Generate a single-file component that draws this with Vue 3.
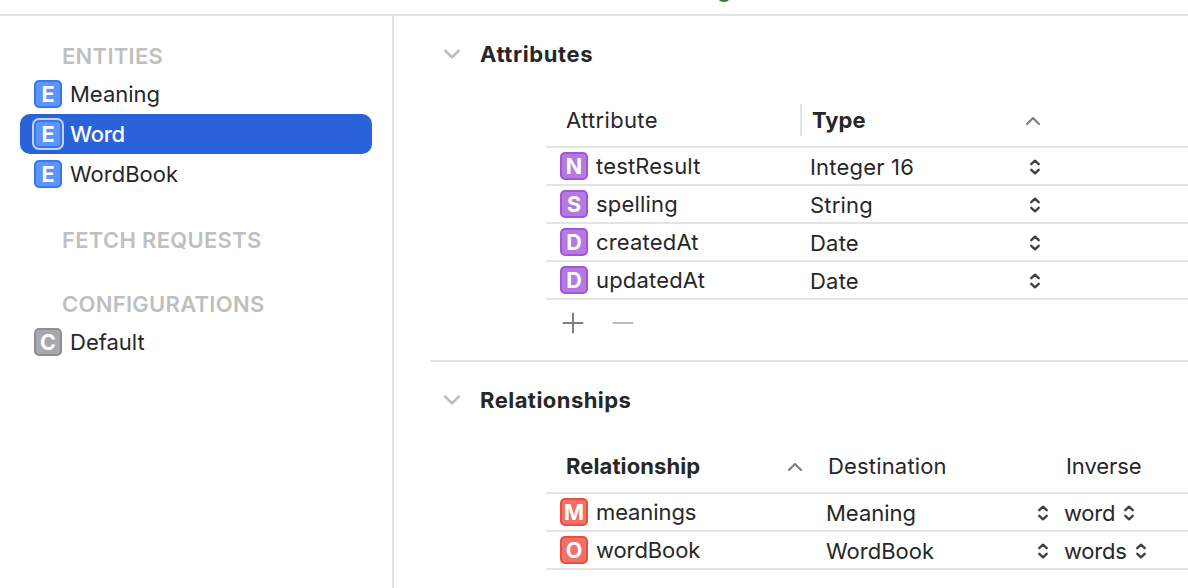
<script setup>
const entities = [
  { name: 'Meaning' },
  { name: 'Word', selected: true },
  { name: 'WordBook' },
]
const attributes = [
  { letter: 'N', name: 'testResult', type: 'Integer 16' },
  { letter: 'S', name: 'spelling', type: 'String' },
  { letter: 'D', name: 'createdAt', type: 'Date' },
  { letter: 'D', name: 'updatedAt', type: 'Date' },
]
const relationships = [
  { letter: 'M', name: 'meanings', destination: 'Meaning', inverse: 'word' },
  { letter: 'O', name: 'wordBook', destination: 'WordBook', inverse: 'words' },
]
const stepper = 'M1.3 5.2 L5 1.7 L8.7 5.2 M1.3 10.8 L5 14.3 L8.7 10.8'
</script>

<template>
  <div class="window">
    <header class="topbar">
      <svg class="top-mark" width="12" height="2" viewBox="0 0 12 2"><path d="M0.8 0 Q2.5 2 6 2 Q9.5 2 11.2 0Z" fill="#2b7a3b" /></svg>
    </header>
    <div class="body">
      <aside class="sidebar">
        <h3 class="group">ENTITIES</h3>
        <div v-for="e in entities" :key="e.name" class="item" :class="{ selected: e.selected }">
          <span class="badge blue">E</span><span>{{ e.name }}</span>
        </div>
        <h3 class="group fetch">FETCH REQUESTS</h3>
        <h3 class="group config">CONFIGURATIONS</h3>
        <div class="item">
          <span class="badge gray">C</span><span>Default</span>
        </div>
      </aside>
      <main class="detail">
        <section class="section">
          <h2 class="title">
            <svg width="18" height="12" viewBox="0 0 18 12"><path d="M2.2 2.6 L9 9.2 L15.8 2.6" fill="none" stroke="#bdbdbd" stroke-width="2.6" stroke-linecap="round" stroke-linejoin="round" /></svg>
            <span>Attributes</span>
          </h2>
          <div class="table attrs">
            <div class="row head">
              <span class="name">Attribute</span>
              <span class="divided"><b>Type</b></span>
              <svg class="sort" width="16" height="10" viewBox="0 0 16 10"><path d="M2 8 L8 2 L14 8" fill="none" stroke="#7c7c7c" stroke-width="2.1" stroke-linecap="round" stroke-linejoin="round" /></svg>
            </div>
            <div v-for="a in attributes" :key="a.name" class="row">
              <span class="name"><span class="badge purple">{{ a.letter }}</span>{{ a.name }}</span>
              <span class="value">{{ a.type }}</span>
              <svg class="step" width="10" height="16" viewBox="0 0 10 16"><path :d="stepper" /></svg>
            </div>
          </div>
          <div class="actions">
            <svg width="22" height="22" viewBox="0 0 22 22"><path d="M1.5 11 H20.5 M11 1.5 V20.5" stroke="#7f7f7f" stroke-width="2" stroke-linecap="round" /></svg>
            <svg width="22" height="22" viewBox="0 0 22 22"><path d="M1.5 11 H20.5" stroke="#bababa" stroke-width="2" stroke-linecap="round" /></svg>
          </div>
        </section>
        <section class="section second">
          <h2 class="title">
            <svg width="18" height="12" viewBox="0 0 18 12"><path d="M2.2 2.6 L9 9.2 L15.8 2.6" fill="none" stroke="#bdbdbd" stroke-width="2.6" stroke-linecap="round" stroke-linejoin="round" /></svg>
            <span>Relationships</span>
          </h2>
          <div class="table rels">
            <div class="row head">
              <span class="name"><b>Relationship</b></span>
              <svg class="sort" width="16" height="10" viewBox="0 0 16 10"><path d="M2 8 L8 2 L14 8" fill="none" stroke="#7c7c7c" stroke-width="2.1" stroke-linecap="round" stroke-linejoin="round" /></svg>
              <span class="dest">Destination</span>
              <span></span>
              <span class="inv">Inverse</span>
            </div>
            <div v-for="r in relationships" :key="r.name" class="row">
              <span class="name"><span class="badge red">{{ r.letter }}</span>{{ r.name }}</span>
              <span></span>
              <span class="value">{{ r.destination }}</span>
              <svg class="step" width="10" height="16" viewBox="0 0 10 16"><path :d="stepper" /></svg>
              <span class="value inverse">{{ r.inverse }}
                <svg class="step" width="10" height="16" viewBox="0 0 10 16"><path :d="stepper" /></svg>
              </span>
            </div>
          </div>
        </section>
      </main>
    </div>
  </div>
</template>

<style>
body { background: #fff; }
</style>

<style scoped>
.window {
  width: 1188px; height: 588px; overflow: hidden;
  display: flex; flex-direction: column;
  font: 400 22px/28px Inter, "Liberation Sans", sans-serif;
  color: #272727; background: #fff; white-space: nowrap;
}
.window * { box-sizing: border-box; }
svg { display: block; flex: none; }
.topbar { height: 16px; flex: none; border-bottom: 2px solid #e4e4e4; padding-left: 718px; }
.body { flex: 1; display: flex; min-height: 0; }
.sidebar { width: 394px; flex: none; border-right: 2px solid #e4e4e4; padding: 26px 20px 0; }
.group { margin: 0 0 4px; padding-left: 42px; font-size: 22px; line-height: 28px; font-weight: 600; letter-spacing: 0.29px; color: #bfbfbf; }
.fetch { margin-top: 32px; }
.config { margin: 36px 0 4px; }
.item { height: 40px; display: flex; align-items: center; gap: 8px; padding-left: 14px; border-radius: 10px; }
.selected { background: #2962d9; color: #fff; font-weight: 500; letter-spacing: -0.25px; }
.badge {
  width: 28px; height: 28px; flex: none; border: 2px solid; border-radius: 5px;
  display: inline-flex; align-items: center; justify-content: center;
  color: #fff; font-size: 21.5px; line-height: 24px; font-weight: 700; letter-spacing: 0;
}
.blue { background: #5e95fa; border-color: #3478f6; }
.gray { background: #a7a7ac; border-color: #8e8e93; }
.purple { background: #b679df; border-color: #a156d6; }
.red { background: #ef716a; border-color: #eb4e3d; }
.selected .badge { box-shadow: 0 0 0 2px #c3d4f6; }
.detail { flex: 1; min-width: 0; padding-left: 36px; }
.section { height: 344px; padding-top: 24px; }
.second { border-top: 2px solid #e4e4e4; height: auto; }
.title { margin: 0; height: 28px; padding-left: 13px; display: flex; align-items: center; gap: 19px; font-size: 22px; font-weight: 700; letter-spacing: 0.6px; }
.second .title { letter-spacing: 0.46px; }
.table { margin: 26px 0 0 116px; }
.row { height: 38px; display: grid; align-items: center; border-bottom: 2px solid #e4e4e4; }
.head { height: 54px; }
.attrs .row { grid-template-columns: 254px 227px 1fr; }
.rels .row { grid-template-columns: 241px 39px 211px 27px 1fr; }
.name { display: flex; align-items: center; gap: 8px; padding-left: 14px; }
.attrs .name { letter-spacing: 0.18px; }
.rels .name { letter-spacing: -0.1px; }
.head .name { padding-left: 20px; }
.attrs .head .name { letter-spacing: 0.33px; }
.rels .head .name { letter-spacing: 0.1px; }
.divided { height: 32px; display: flex; align-items: center; border-left: 2px solid #e4e4e4; padding-left: 10px; }
.attrs .value { padding-left: 10px; letter-spacing: 0.2px; }
.value { position: relative; top: 1px; }
.sort { margin-top: 2px; }
.attrs .sort { margin-left: -2px; }
.attrs .step { margin-left: 3px; }
.step { margin-top: 2px; }
.rels .row > .step { margin-left: 1px; }
.dest { padding-left: 2px; letter-spacing: 0.17px; }
.inv { padding-left: 2px; letter-spacing: -0.1px; }
.inverse { display: flex; align-items: center; gap: 9px; letter-spacing: -0.25px; }
.step path { fill: none; stroke: #3f3f3f; stroke-width: 2.3; stroke-linecap: round; stroke-linejoin: round; }
.inverse .step { position: relative; top: -1px; }
.actions { margin: 12px 0 0 132px; display: flex; gap: 28px; }
b { font-weight: 700; }
</style>
